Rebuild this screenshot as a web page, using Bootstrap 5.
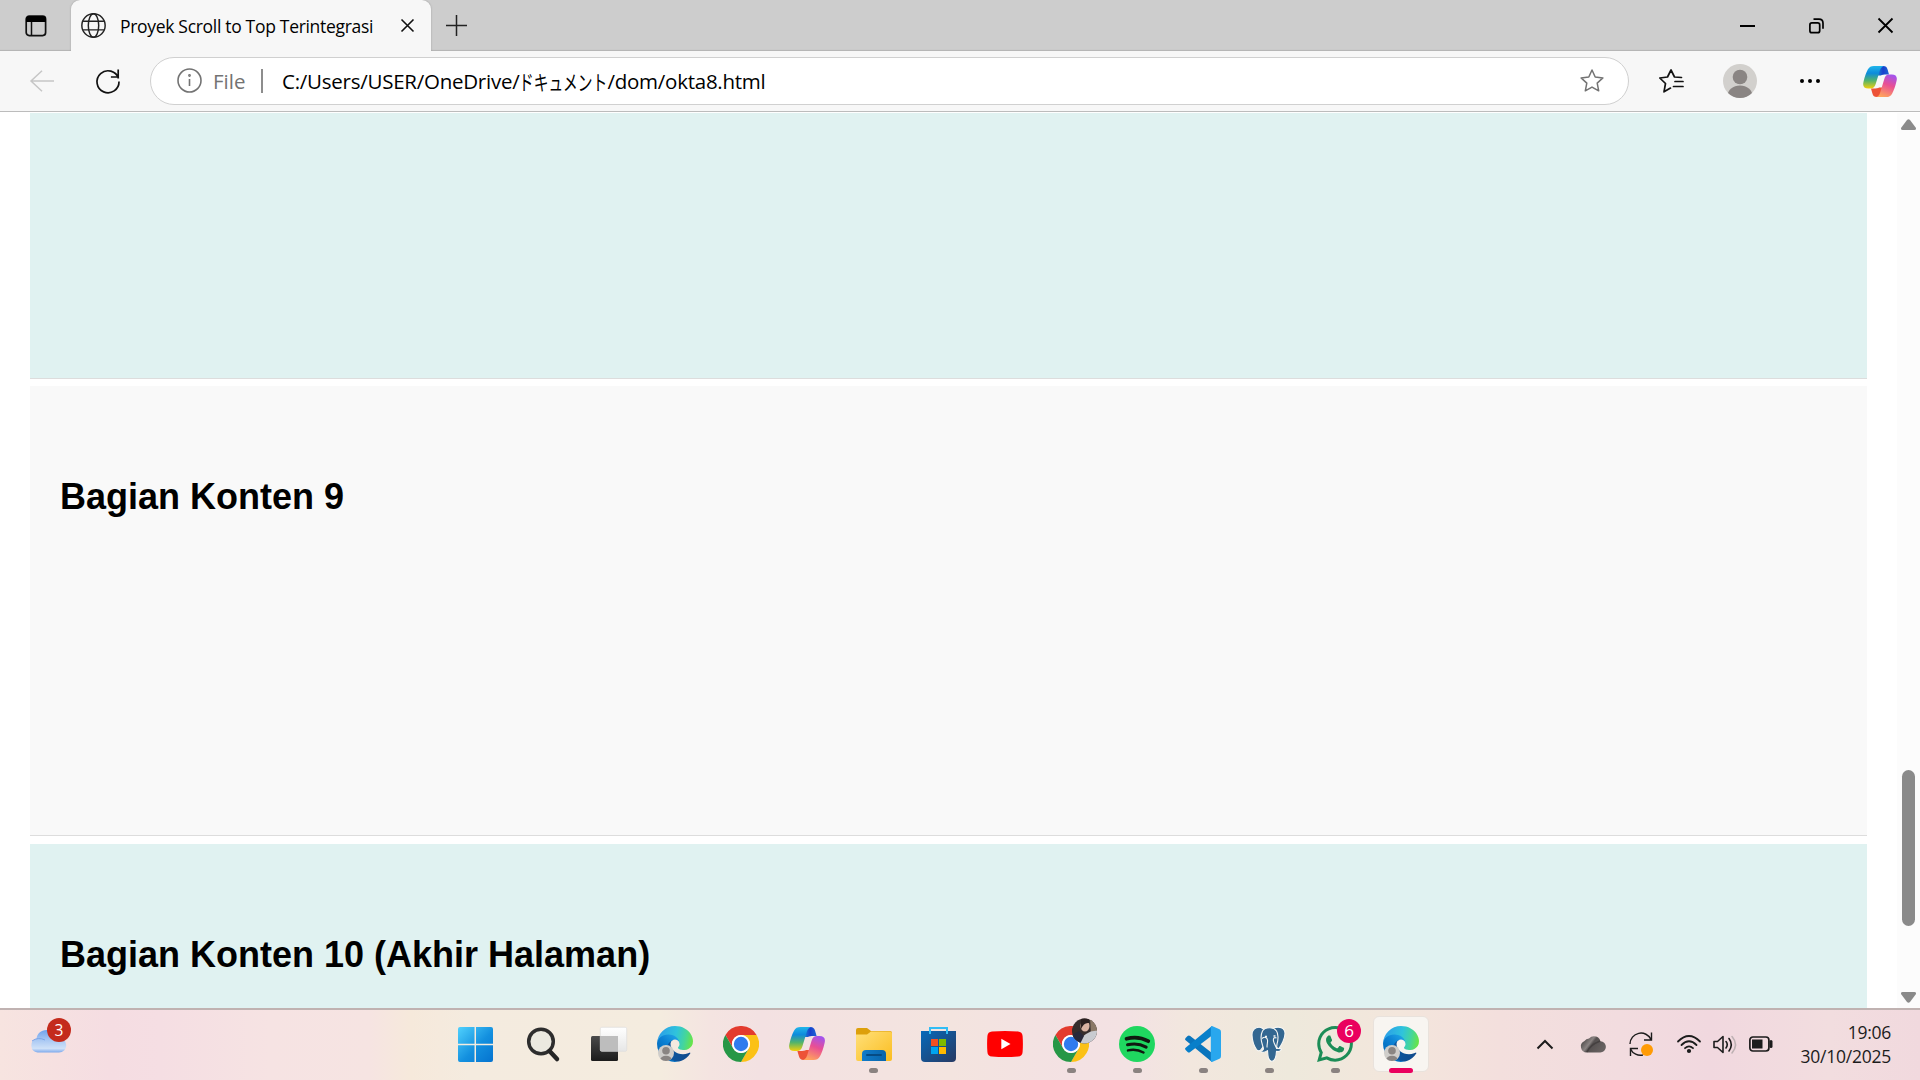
<!DOCTYPE html>
<html lang="id">
<head>
<meta charset="utf-8">
<title>Proyek Scroll to Top Terintegrasi</title>
<link href="https://cdn.jsdelivr.net/npm/bootstrap@5.3.0/dist/css/bootstrap.min.css" rel="stylesheet">
<style>
body{width:1920px;height:1080px;overflow:hidden;font-family:"Open Sans","Noto Sans",sans-serif;color:#000;background:#fff}
svg{display:block;flex:none;overflow:visible}
.tabstrip{height:51px;background:#cdcdcd;box-shadow:inset 0 -2px 1px -1px #b4b4b4}
.tabstrip-menu{width:71px;padding-left:25px}
.tab-active{width:360px;height:51px;background:#f7f7f7;border-radius:9px 9px 0 0;padding-left:10px;box-shadow:0 0 2px #999;clip-path:inset(0 -3px 0 -3px)}
.tab-title{font-size:17.5px;letter-spacing:-.31px;width:265px;margin-left:14px;line-height:24px;white-space:nowrap}
.win-buttons{padding-right:27px;gap:54px}
.toolbar-row{height:61px;background:#f7f7f7;border-bottom:1px solid #bcbcbc}
.nav-buttons{width:150px;padding-left:30px;gap:42px}
.address{width:1479px;height:48px;margin-top:-1px;background:#fff;border:1.5px solid #d0d0d0;border-radius:24px;padding:0 24px 0 26px}
.file-label{font-size:20.5px;color:#737373;margin-left:11px;width:48px;line-height:28px}
.address-sep{width:2px;height:24px;background:#8d8d8d}
.address-url{font-size:20.5px;margin-left:19px;line-height:28px;white-space:nowrap;letter-spacing:-.25px}
.kana{display:inline-block;width:88px;height:28px;vertical-align:top}
.kana b{display:inline-block;font:400 21px/28px "Noto Sans CJK JP",sans-serif;letter-spacing:0;transform:scaleX(.7);transform-origin:0 50%}
.page{height:896px;padding-top:1px;overflow:hidden}
.page-body{width:1837px;margin-left:30px;font-family:"Liberation Sans",Arial,sans-serif}
.bagian{height:450px;margin-bottom:8px;background:#f9f9f9;border-bottom:1px solid #ddd;padding:90px 30px 0}
.bagian.teal{background:#e0f2f1}
.bagian-sisa{height:266px;margin-bottom:7px}
.bagian-akhir{height:165px;border:0;margin-bottom:0}
.bagian h2{font-size:36px;line-height:41px;font-weight:700;margin:0;color:#000}
.scroll-track{width:23px;background:#fcfcfc}
.scroll-thumb{width:13px;height:156px;border-radius:7px;background:#8a8a8a}
.taskbar{height:72px;border-top:2px solid #c0b2b1;background:linear-gradient(90deg,#f7e4e0 0,#f5dde2 110px,#f5dee3 160px,#f6e3e3 270px,#f6e4e2 370px,#f6e9db 410px,#f4ebdf 470px,#f4ecdf 660px,#f4e4e1 710px,#f3e1e2 760px,#f3e4df 950px,#f3e1e3 1070px,#f3e2e3 1130px,#f2e7de 1190px,#eee9dc 1290px,#f3e6dc 1400px,#f3dfdd 1500px,#f2dcdf 1620px,#f1d8df 1710px,#f2dddf 1830px,#f1d9de 1920px)}
.weather-cell{width:444px;padding:8px 0 0 30px}
.task{width:66px;height:70px;padding-top:16px}
.task-mark{position:absolute;bottom:7px;left:29px;width:9px;height:5px;border-radius:3px;background:#8a8280}
.task-current{position:relative}
.task-current::before{content:"";position:absolute;left:5px;top:6px;width:56px;height:56px;border-radius:6px;background:#f8f5f1;border:1px solid #e9e2dc}
.task-current .task-mark{left:21px;width:24px;background:#ea005e}
.count-badge{position:absolute;width:24px;height:24px;border-radius:50%;color:#fff;background:#ea005e;font-size:17px;line-height:24px;text-align:center}
.weather-badge{left:17px;top:0;background:#c42b1c;font-size:15.5px}
.tray{width:486px;padding-left:103px}
.clock{font-size:17.5px;line-height:24px;color:#1c1c1c;letter-spacing:-.25px;text-align:right;margin-left:auto;margin-right:29px;padding-bottom:3px}
</style>
<script src="https://cdn.jsdelivr.net/npm/bootstrap@5.3.0/dist/js/bootstrap.bundle.min.js"></script>
</head>
<body class="d-flex flex-column m-0">
<svg width="0" height="0" class="position-absolute">
<defs>
<linearGradient id="e1" x1="59" y1="177" x2="237" y2="177" gradientUnits="userSpaceOnUse"><stop stop-color="#0c59a4"/><stop offset="1" stop-color="#114a8b"/></linearGradient>
<linearGradient id="e2" x1="150" y1="100" x2="40" y2="225" gradientUnits="userSpaceOnUse"><stop stop-color="#1b9de2"/><stop offset=".4" stop-color="#0c81d4"/><stop offset="1" stop-color="#0067b8"/></linearGradient>
<linearGradient id="e3" x1="10" y1="60" x2="250" y2="110" gradientUnits="userSpaceOnUse"><stop stop-color="#2b9fe8"/><stop offset=".5" stop-color="#2fc3dc"/><stop offset=".78" stop-color="#45d69a"/><stop offset="1" stop-color="#67e449"/></linearGradient>
<linearGradient id="cA" x1="0" y1="0" x2="0" y2="1"><stop stop-color="#20b6ea"/><stop offset=".32" stop-color="#0d8bdc"/><stop offset=".65" stop-color="#54b46a"/><stop offset="1" stop-color="#f4d00b"/></linearGradient>
<linearGradient id="cB" x1=".7" y1="0" x2=".35" y2="1"><stop stop-color="#a353ed"/><stop offset=".45" stop-color="#e94f93"/><stop offset="1" stop-color="#ffa35d"/></linearGradient>
<linearGradient id="cC"><stop stop-color="#1685d6"/><stop offset=".5" stop-color="#1740cd"/><stop offset="1" stop-color="#1e65d6"/></linearGradient>
<linearGradient id="win" x1="0" y1="0" x2="1" y2="1"><stop stop-color="#50d1fd"/><stop offset=".55" stop-color="#1390df"/><stop offset="1" stop-color="#0573cf"/></linearGradient>
<symbol id="edge" viewBox="0 0 256 256">
<path fill="url(#e1)" d="M231.14 189.88a94.14 94.14 0 0 1-10.54 4.71 101.88 101.88 0 0 1-35.9 6.46c-47.32 0-88.54-32.55-88.54-74.32A31.48 31.48 0 0 1 112.59 99.43c-42.8 1.8-53.8 46.4-53.8 72.53 0 73.88 68.09 81.37 82.76 81.37 7.91 0 19.84-2.3 27-4.56l1.31-.44a128.34 128.34 0 0 0 66.6-52.8 4 4 0 0 0-5.32-5.65z"/>
<path fill="url(#e2)" d="M105.73 241.42a79.2 79.2 0 0 1-22.74-21.34 80.72 80.72 0 0 1 29.53-120.65c3.12-1.47 8.45-4.13 15.54-4a32.35 32.35 0 0 1 25.69 13 31.88 31.88 0 0 1 6.36 18.66c0-.21 24.46-79.6-80-79.6-43.9 0-80 41.66-80 78.21a130.15 130.15 0 0 0 12.11 56 128 128 0 0 0 156.38 67.11 75.55 75.55 0 0 1-62.78-8z"/>
<path fill="url(#e3)" d="M152.29 148.86c-.81 1.05-3.3 2.5-3.3 5.66 0 2.61 1.7 5.12 4.72 7.23 14.38 10 41.49 8.68 41.56 8.68a59.56 59.56 0 0 0 30.27-8.35 61.38 61.38 0 0 0 30.43-52.88c.26-22.41-8-37.31-11.34-43.91C223.46 23.84 177.72 0 128 0A128 128 0 0 0 0 126.2c.48-36.54 36.8-66.05 80-66.05 3.5 0 23.46.34 42 10.07 16.34 8.58 24.9 18.94 30.85 29.21 6.18 10.67 7.28 24.15 7.28 29.52s-2.74 13.33-7.84 19.91z"/>
<clipPath id="pf"><circle cx="64" cy="192" r="57"/></clipPath>
<circle cx="64" cy="192" r="57" fill="#cfcdca"/><g fill="#8a8583" clip-path="url(#pf)"><circle cx="64" cy="176" r="27"/><ellipse cx="64" cy="243" rx="42" ry="32"/></g>
</symbol>
<symbol id="chrome" viewBox="0 0 48 48">
<path fill="#e33b2e" d="M3.2 12A24 24 0 0 1 44.8 12H24a12 12 0 0 0-10.4 18z"/>
<path fill="#fbc116" d="M44.8 12A24 24 0 0 1 24 48l10.4-18A12 12 0 0 0 24 12z"/>
<path fill="#269746" d="M24 48A24 24 0 0 1 3.2 12l10.4 18a12 12 0 0 0 20.8 0z"/>
<circle cx="24" cy="24" r="12" fill="#fff"/><circle cx="24" cy="24" r="9.6" fill="#2f7bee"/>
</symbol>
<symbol id="copilot" viewBox="0 0 36 33">
<path fill="url(#cC)" d="M18 0h3.500c2.500 0 3.800 1.200 4.500 3.500L27.600 9H25c-3 0-5 .300-6 1h-4z"/>
<path fill="#ed5237" d="M18 33h-3.500c-2.500 0-3.800-1.200-4.500-3.500L8.400 24H11c3 0 5-.300 6-1h4z"/>
<path fill="url(#cA)" d="M11.500 0H22c-3 .8-4 3.500-5 7.500L13.500 19C12.500 22.500 11 24 8 24H5.500C1 24-.7 21.500.4 17 1.800 11 3.300 7 5 3.800 6.500 1 8.500 0 11.500 0z"/>
<path fill="url(#cB)" d="M24.500 33H14c3-.8 4-3.500 5-7.500L22.500 14c1-3.500 2.500-5 5.500-5h2.500c4.500 0 6.200 2.500 5.100 7-1.400 6-2.900 10-4.600 13.200-1.500 2.800-3.500 3.800-6.500 3.800z"/>
</symbol>
</defs>
</svg>

<header>
<div class="tabstrip d-flex align-items-center">
<div class="tabstrip-menu"><svg width="22" height="22" viewBox="0 0 22 22"><rect x="1.200" y="1.200" width="19.400" height="19.400" rx="3" fill="none" stroke="#111" stroke-width="1.700"/><path d="M1 7V4q0-3 3-3h14q3 0 3 3v3z" fill="#000"/><path d="M6.500 7v13" stroke="#111" stroke-width="1.500"/></svg></div>
<div class="tab-active d-flex align-items-center">
<svg width="25" height="25" viewBox="0 0 24 24" fill="none" stroke="#222" stroke-width="1.400"><circle cx="12" cy="12" r="11.200"/><ellipse cx="12" cy="12" rx="5" ry="11.200"/><path d="M2 8h20M2 16.200h20"/></svg>
<div class="tab-title">Proyek Scroll to Top Terintegrasi</div>
<svg class="ms-3" width="13" height="13" viewBox="0 0 13 13" stroke="#111" stroke-width="1.600"><path d="M.5.500l12 12M12.500.500l-12 12"/></svg>
</div>
<svg style="margin-left:15px" width="21" height="21" viewBox="0 0 21 21" stroke="#222" stroke-width="1.500"><path d="M0 10.500h21M10.500 0v21"/></svg>
<div class="win-buttons d-flex align-items-center ms-auto">
<svg width="15" height="16"><path d="M0 8h15" stroke="#000" stroke-width="2"/></svg>
<svg width="15" height="16" viewBox="0 0 15 16" fill="none" stroke="#000" stroke-width="1.700"><rect x=".9" y="4.900" width="9.800" height="9.800" rx="2"/><path d="M4.500 1.200H10q4 0 4 4v5.500"/></svg>
<svg width="15" height="15" viewBox="0 0 15 15" stroke="#000" stroke-width="1.800"><path d="M.5.500l14 14M14.500.500l-14 14"/></svg>
</div>
</div>
<div class="toolbar-row d-flex align-items-center">
<div class="nav-buttons d-flex align-items-center">
<svg width="24" height="22" viewBox="0 0 24 22" fill="none" stroke="#c6c6c6" stroke-width="1.500"><path d="M12 .800L1 11l11 10.200M1 11h23"/></svg>
<svg width="24" height="24" viewBox="0 0 24 24" fill="none" stroke="#111" stroke-width="1.700"><path d="M22.500 9.500A11 11 0 1 0 23 12.500M22.200.500v7.500h-7.300"/></svg>
</div>
<div class="address d-flex align-items-center">
<svg width="25" height="25" viewBox="0 0 25 25" fill="none" stroke="#737373" stroke-width="1.600"><circle cx="12.500" cy="12.500" r="11.500"/><path d="M12.500 11v7"/><circle cx="12.500" cy="7.500" r=".6"/></svg>
<span class="file-label">File</span><span class="address-sep"></span>
<span class="address-url">C:/Users/USER/OneDrive/<span class="kana"><b>ドキュメント</b></span>/dom/okta8.html</span>
<svg class="ms-auto" width="24" height="24" viewBox="0 0 24 24" fill="none" stroke="#737373" stroke-width="1.500" stroke-linejoin="round"><path d="M12 1l3.200 7 7.700.900-5.700 5.200 1.500 7.700-6.700-3.700-6.700 3.700 1.500-7.700L1.100 8.900l7.700-.9z"/></svg>
</div>
<div class="d-flex align-items-center" style="margin-left:30px">
<svg width="24" height="24" viewBox="0 0 24 24" fill="none" stroke="#111" stroke-width="1.700" stroke-linejoin="round" stroke-linecap="round"><path d="M22.500 8.500L15.500 8 12 1 8.500 8l-7.700 1 5.700 5.500L5 22.800l6.500-3.700"/><path d="M16 12.500h8M14.500 17.500H24" /></svg>
<svg style="margin-left:40px" width="34" height="34" viewBox="0 0 34 34"><clipPath id="av"><circle cx="17" cy="17" r="17"/></clipPath><circle cx="17" cy="17" r="17" fill="#d2d0cd"/><g fill="#8a8583" clip-path="url(#av)"><circle cx="17" cy="13" r="7.300"/><ellipse cx="17" cy="32" rx="12.500" ry="10.500"/></g></svg>
<svg style="margin-left:43px" width="20" height="6"><circle cx="2" cy="3" r="2"/><circle cx="10" cy="3" r="2"/><circle cx="18" cy="3" r="2"/></svg>
<svg style="margin-left:43px" width="34" height="31"><use href="#copilot"/></svg>
</div>
</div>
</header>

<main class="page d-flex">
<div class="page-body">
<section class="bagian teal bagian-sisa"></section>
<section class="bagian"><h2>Bagian Konten 9</h2></section>
<section class="bagian teal bagian-akhir"><h2>Bagian Konten 10 (Akhir Halaman)</h2></section>
</div>
<div class="scroll-track ms-auto d-flex flex-column align-items-center">
<svg width="15" height="11" style="margin-top:6px" fill="#8a8a8a"><path d="M6 1q1.500-1.500 3 0l6 8q.5 2-1.500 2h-12Q-.5 11 0 9z"/></svg>
<div class="scroll-thumb" style="margin-top:640px"></div>
<svg width="15" height="11" style="margin-top:66px" fill="#8a8a8a"><path d="M6 10q1.500 1.500 3 0l6-8q.5-2-1.500-2h-12Q-.5 0 0 2z"/></svg>
</div>
</main>

<footer class="taskbar d-flex">
<div class="weather-cell"><div class="position-relative">
<svg width="36" height="35" viewBox="0 0 36 35"><defs><linearGradient id="cl" x1="0" y1="0" x2="0" y2="1"><stop stop-color="#6fa3ee"/><stop offset=".45" stop-color="#a9c8f3"/><stop offset=".82" stop-color="#cfe1f8"/><stop offset="1" stop-color="#7da9ec"/></linearGradient></defs><path fill="url(#cl)" d="M7.500 34.500a7 7 0 0 1-1-13.700C7 15.500 11 12 16.500 12c5 0 8 2.500 10 8H29a7.200 7.200 0 0 1 0 14.500z"/><path d="M2 23q6-4.500 13-1" stroke="#7ba6ea" fill="none"/></svg>
<span class="count-badge weather-badge">3</span></div></div>

<div class="d-flex">
<div class="task position-relative"><svg style="margin-left:14px" width="35" height="36" viewBox="0 0 35 36"><path fill="url(#win)" d="M2 1h14.800v17H0V3q0-2 2-2zM18 1h15q2 0 2 2v15H18zM0 19.200h16.800V36H2q-2 0-2-2zM18 19.200h17V34q0 2-2 2H18z"/><path d="M17.300 1v35M0 18.400h35" stroke="#f4ecdf" stroke-width="1.300"/></svg></div>
<div class="task position-relative"><svg style="margin-left:17px" width="33" height="36" fill="none"><circle cx="14" cy="15.500" r="12.300" stroke="#2d2d2d" stroke-width="3.500" fill="#ebe9e0"/><path d="M22.500 25l7.500 8" stroke="#252525" stroke-width="4.500" stroke-linecap="round"/></svg></div>
<div class="task position-relative"><svg style="margin-left:15px" width="36" height="36"><defs><linearGradient id="tv" x1="0" y1="0" x2="0" y2="1"><stop stop-color="#4a4a4a"/><stop offset="1" stop-color="#1b1b1b"/></linearGradient><linearGradient id="tw" x1="0" y1="0" x2="0" y2="1"><stop stop-color="#fff"/><stop offset="1" stop-color="#e6e6e6"/></linearGradient></defs><rect y="10" width="27" height="25" rx="1.500" fill="url(#tv)"/><rect x="9.300" y="1.300" width="26.400" height="24" rx="1.500" fill="url(#tw)" stroke="#dcdcdc" stroke-width=".7"/><path d="M9 10h18v15H9z" fill="#bdbdbd"/></svg></div>
<div class="task position-relative"><svg class="mx-auto" width="36" height="36"><use href="#edge"/></svg></div>
<div class="task position-relative"><svg class="mx-auto" width="36" height="36"><use href="#chrome"/></svg></div>
<div class="task position-relative"><svg class="mx-auto" width="36" height="35"><use href="#copilot"/></svg></div>
<div class="task position-relative"><svg style="margin-left:16px" width="36" height="36"><defs><linearGradient id="fo" x1="0" y1="0" x2="1" y2="1"><stop stop-color="#ffe07a"/><stop offset="1" stop-color="#fbbd20"/></linearGradient><linearGradient id="fb" x1="0" y1="0" x2="1" y2="0"><stop stop-color="#117cca"/><stop offset="1" stop-color="#0864aa"/></linearGradient></defs><path d="M0 4q0-2 2-2h9l4 3h19q2 0 2 2v6H0z" fill="#dda00b"/><path d="M0 8.500h11l4-3h19q2 0 2 2V33q0 2-2 2H2q-2 0-2-2z" fill="url(#fo)"/><path d="M6 35v-7q0-4 4-4h16q4 0 4 4v7z" fill="url(#fb)"/><path d="M11 29h14" stroke="#064b83" stroke-width="2" stroke-linecap="round"/></svg><span class="task-mark"></span></div>
<div class="task position-relative"><svg style="margin-left:15px" width="35" height="36"><defs><linearGradient id="st" x1="0" y1="0" x2="1" y2="1"><stop stop-color="#0669ba"/><stop offset="1" stop-color="#273a63"/></linearGradient></defs><path d="M0 5h35v27q0 4-4 4H4q-4 0-4-4z" fill="url(#st)"/><path d="M9 8V2h17v6" fill="none" stroke="#31bdf5" stroke-width="2"/><path d="M10 13h7v7h-7z" fill="#f25022"/><path d="M18 13h7v7h-7z" fill="#7fba00"/><path d="M10 21h7v7h-7z" fill="#00a4ef"/><path d="M18 21h7v7h-7z" fill="#ffb900"/></svg></div>
<div class="task position-relative"><svg class="mx-auto" width="36" height="36"><path fill="#f00" d="M5 5.400q13-1 26 0 4.300.3 4.600 4.600.6 8 0 16-.3 4.300-4.600 4.600-13 1-26 0Q.700 30.300.400 26q-.6-8 0-16Q.700 5.700 5 5.400z"/><path fill="#fff" d="M14.300 12.700v10.600l9.200-5.300z"/></svg></div>
<div class="task position-relative"><svg class="mx-auto" width="36" height="36"><use href="#chrome" width="36" height="36"/><clipPath id="ph"><circle cx="31.500" cy="5" r="12.500"/></clipPath><g clip-path="url(#ph)"><path d="M18-8h27v28H18z" fill="#352d2c"/><path d="M37-8h9v17h-8z" fill="#8b7967"/><ellipse cx="32" cy="0" rx="4.500" ry="5.500" fill="#d9b3a3"/><path d="M28-8h8v5q-5-1-8 6z" fill="#2a2020"/><path d="M33 8q6-4 12-3v14H25q2-7 8-11z" fill="#c8cbd0"/><path d="M19 9l7-4 5 5-4 8-8-1z" fill="#27283a"/></g></svg><span class="task-mark"></span></div>
<div class="task position-relative"><svg class="mx-auto" width="36" height="36"><circle cx="18" cy="18" r="18" fill="#1fd760"/><g fill="none" stroke="#101810" stroke-linecap="round"><path d="M7.500 12.800q11.500-3.200 21.800 2.400" stroke-width="3.700"/><path d="M8.500 18.800q10-2.600 18.700 2.300" stroke-width="3"/><path d="M9 24.400q8.500-1.800 15.500 2.100" stroke-width="2.500"/></g></svg><span class="task-mark"></span></div>
<div class="task position-relative"><svg class="mx-auto" width="36" height="36"><path d="M.6 12l2-2q1.200-1 2.600 0L27 27v9L.6 14.200q-1.200-1 0-2.200z" fill="#0a75bd"/><path d="M.6 24l2 2q1.200 1 2.600 0L27 9.500V0L.6 21.800q-1.200 1 0 2.200z" fill="#087fca"/><path d="M27 0l7.500 3.300Q36 4 36 6v24q0 2-1.500 2.700L27 36q-1.200 0-1.200-2V2q0-2 1.200-2z" fill="#29a7ee"/></svg><span class="task-mark"></span></div>
<div class="task position-relative"><svg class="mx-auto" width="36" height="36" fill="#336791" stroke="#f7f7f4" stroke-width="1.100" stroke-linejoin="round"><path d="M10 1.500C4 .5.8 4 1 9c.2 5 2 11 4.500 14.500 1.500 2 3.500 1.600 4.800-.3L14 18V4z"/><path d="M22 2.500C28-.5 34 2 34 7.500c0 5-3.500 12-6.500 15.500l-6-5z"/><path d="M11.500 5C14 .7 22.500.7 25.500 5c1.800 2.500 2 8.500.5 13l-.5 4.500q5-.2 5 .8c-.7 2-3.500 2.400-5 2.100-.3 5.600-1.500 9.800-4.500 9.800-4 0-4.200-5.400-4.500-10.700-2 2.200-5.500 2.300-7.200.7 3.700-.8 3.700-2 2.200-6C9.700 14 9.500 9 11.500 5z"/><path d="M11 12.500c2.500-2 5-1.500 5.500 1.500.4 2.500-.8 5-.4 7.500M25.500 12c-2.300-1-3.500 0-3 3 .4 2.500 2 4.500 3 7" fill="none"/><path d="M14 10.500h2M22.500 10h2" stroke-width="1.500"/></svg><span class="task-mark"></span></div>
<div class="task position-relative"><svg class="mx-auto" width="36" height="36" viewBox="0 0 24 24" fill="#1c8d57"><path d="M17.472 14.382c-.297-.149-1.758-.867-2.030-.967-.273-.099-.471-.148-.670.150-.197.297-.767.966-.940 1.164-.173.199-.347.223-.644.075-.297-.150-1.255-.463-2.390-1.475-.883-.788-1.480-1.761-1.653-2.059-.173-.297-.018-.458.130-.606.134-.133.298-.347.446-.520.149-.174.198-.298.298-.497.099-.198.050-.371-.025-.520-.075-.149-.669-1.612-.916-2.207-.242-.579-.487-.500-.669-.510-.173-.008-.371-.010-.570-.010-.198 0-.520.074-.792.372-.272.297-1.040 1.016-1.040 2.479 0 1.462 1.065 2.875 1.213 3.074.149.198 2.096 3.200 5.077 4.487.709.306 1.262.489 1.694.625.712.227 1.360.195 1.871.118.571-.085 1.758-.719 2.006-1.413.248-.694.248-1.289.173-1.413-.074-.124-.272-.198-.570-.347m-5.421 7.403h-.004a9.870 9.870 0 0 1-5.031-1.378l-.361-.214-3.741.982.998-3.648-.235-.374a9.860 9.860 0 0 1-1.510-5.260c.001-5.450 4.436-9.884 9.888-9.884 2.640 0 5.122 1.030 6.988 2.898a9.825 9.825 0 0 1 2.893 6.994c-.003 5.450-4.437 9.884-9.885 9.884m8.413-18.297A11.815 11.815 0 0 0 12.050 0C5.495 0 .160 5.335.157 11.892c0 2.096.547 4.142 1.588 5.945L.057 24l6.305-1.654a11.882 11.882 0 0 0 5.683 1.448h.005c6.554 0 11.890-5.335 11.893-11.893a11.821 11.821 0 0 0-3.480-8.413Z"/></svg><span class="count-badge" style="left:35px;top:9px">6</span><span class="task-mark"></span></div>
<div class="task task-current"><svg class="mx-auto position-relative" width="36" height="36"><use href="#edge"/></svg><span class="task-mark"></span></div>
</div>

<div class="tray d-flex align-items-center">
<svg width="16" height="9" fill="none" stroke="#1c1c1c" stroke-width="2"><path d="M.5 7.500L8 0l7.500 7.500"/></svg>
<svg style="margin-left:28px" width="24" height="19"><defs><linearGradient id="od" x1="0" y1="0" x2="1" y2=".5"><stop stop-color="#302c2b"/><stop offset=".45" stop-color="#8a8382"/><stop offset=".55" stop-color="#555050"/><stop offset="1" stop-color="#676160"/></linearGradient></defs><path fill="url(#od)" d="M6 16.500A6 6 0 0 1 3.500 5Q5 2.500 8 2.500 10 .2 13 .2q5 0 6.500 5a5.600 5.600 0 0 1-.5 11.300z"/><path d="M6 16Q9 9 19 5" stroke="#454040" fill="none" stroke-width="1.500"/></svg>
<svg style="margin-left:24px" width="24" height="26" fill="none" stroke="#1c1c1c" stroke-width="1.400"><path d="M1 12A11 11 0 0 1 22 7.500M22.500.500V8H15M1.500 24v-7.500H9M1.500 17A11 11 0 0 0 14 23"/><circle cx="18" cy="18" r="6" fill="#ff9b05" stroke="none"/></svg>
<svg style="margin-left:24px" width="24" height="20" fill="none" stroke="#1c1c1c" stroke-width="1.800" stroke-linecap="round"><path d="M1 6.500Q12-4.500 23 6.500M4.500 10Q12 2.500 19.500 10M8 13.200Q12 9.500 16 13.200"/><circle cx="12" cy="16" r="1.200" fill="#1c1c1c"/></svg>
<svg style="margin-left:12px" width="24" height="21" fill="none" stroke="#1c1c1c" stroke-width="1.600" stroke-linejoin="round" stroke-linecap="round"><path d="M1 6.500h3.500L10 1.500v16l-5.500-5H1zM13 6.500q2.500 3 0 6.500M16 3.500q4.500 6 0 12.500"/><path d="M19 1.500q7 8 0 16.500" stroke="#beb1b3"/></svg>
<svg style="margin-left:12px" width="24" height="18" fill="none" stroke="#1c1c1c" stroke-width="1.700"><rect x=".9" y="1" width="19" height="14" rx="3"/><path d="M3 3.500h10.500v9H3z" fill="#1c1c1c" stroke="none"/><path d="M22 5.500v5" stroke-width="3" stroke-linecap="round"/></svg>
<div class="clock"><div>19:06</div><div>30/10/2025</div></div>
</div>
</footer>
</body>
</html>
